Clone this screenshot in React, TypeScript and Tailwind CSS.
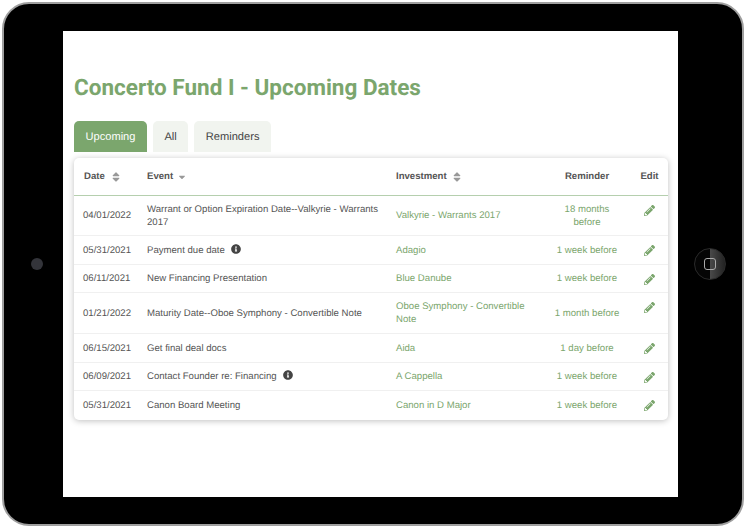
import React from 'react';
import { FaCaretDown, FaInfoCircle, FaPencilAlt, FaSort } from 'react-icons/fa';

const rows = [
  { date: '04/01/2022', event: 'Warrant or Option Expiration Date--Valkyrie - Warrants 2017', investment: 'Valkyrie - Warrants 2017', reminder: '18 months before', h: 'h-[40px]' },
  { date: '05/31/2021', event: 'Payment due date', info: true, investment: 'Adagio', reminder: '1 week before', h: 'h-[29px]' },
  { date: '06/11/2021', event: 'New Financing Presentation', investment: 'Blue Danube', reminder: '1 week before', h: 'h-[28px]' },
  { date: '01/21/2022', event: 'Maturity Date--Oboe Symphony - Convertible Note', investment: 'Oboe Symphony - Convertible Note', reminder: '1 month before', h: 'h-[41px]' },
  { date: '06/15/2021', event: 'Get final deal docs', investment: 'Aida', reminder: '1 day before', h: 'h-[29px]' },
  { date: '06/09/2021', event: 'Contact Founder re: Financing', info: true, investment: 'A Cappella', reminder: '1 week before', h: 'h-[28px]' },
  { date: '05/31/2021', event: 'Canon Board Meeting', investment: 'Canon in D Major', reminder: '1 week before', h: 'h-[30px]' },
];

export default function App() {
  return (
    <div className="w-[746px] h-[528px] bg-white pl-[2px] pt-[2px] font-['Liberation_Sans',sans-serif] [text-rendering:geometricPrecision]">
      {/* device frame */}
      <div className="w-[742px] h-[524px] flex rounded-[27px] bg-black border-2 border-[#9f9f9f]">
        <div className="w-[59px] flex items-center justify-center pl-[7px]">
          <div className="w-[12px] h-[12px] rounded-full bg-[#33343a]" />
        </div>

        {/* screen */}
        <div className="w-[615px] h-[466px] mt-[27px] bg-white px-[11px]">
          <h1 className="mt-[43px] font-['Roboto',sans-serif] text-[22.5px] leading-[28px] font-bold text-[#7ba66d]">Concerto Fund I - Upcoming Dates</h1>

          <div className="mt-[19px] flex gap-[6px] text-[11.1px] leading-[31px] h-[31px]">
            <div className="px-[11.5px] pt-px rounded-t-[5px] bg-[#7ba66d] text-white">Upcoming</div>
            <div className="px-[11.5px] pt-px rounded-t-[5px] bg-[#f1f4ef] text-[#444]">All</div>
            <div className="px-[11.5px] pt-px rounded-t-[5px] bg-[#f1f4ef] text-[#444]">Reminders</div>
          </div>

          <div className="mt-[6px] w-[594px] rounded-[5px] bg-white shadow-[0_1px_6px_rgba(0,0,0,0.25)] overflow-hidden">
            <table className="w-full table-fixed border-collapse text-[9.6px] leading-[13px]">
              <colgroup>
                <col className="w-[73px]" />
                <col className="w-[249px]" />
                <col className="w-[147px]" />
                <col className="w-[88px]" />
                <col className="w-[37px]" />
              </colgroup>
              <thead>
                <tr className="h-[37px] border-b border-[#b5cfae] text-[#555] font-bold text-left">
                  <th className="pl-[10px] pt-px">
                    <span className="flex items-center gap-[6px]">Date <FaSort className="text-[#999] w-[10px] h-[12px]" /></span>
                  </th>
                  <th className="pt-px">
                    <span className="flex items-center gap-[4px]">Event <FaCaretDown className="text-[#999] w-[10px] h-[10px]" /></span>
                  </th>
                  <th className="pt-px">
                    <span className="flex items-center gap-[5px]">Investment <FaSort className="text-[#999] w-[10px] h-[12px]" /></span>
                  </th>
                  <th className="pt-px text-center">Reminder</th>
                  <th className="pt-px text-center">Edit</th>
                </tr>
              </thead>
              <tbody>
                {rows.map((row) => (
                  <tr key={row.date + row.event} className={`${row.h} border-b border-[#f0f0f0] last:border-b-0`}>
                    <td className="pl-[9px] pt-px text-[#555]">{row.date}</td>
                    <td className="text-[#555] pt-px pr-[12px]">
                      {row.event}
                      {row.info && <FaInfoCircle className="inline ml-[6px] mb-[2px] w-[10px] h-[10px] text-[#444]" />}
                    </td>
                    <td className="text-[#7ba66d] pt-px pr-[8px]">{row.investment}</td>
                    <td className="text-[#7ba66d] pt-px text-center px-[8px]">{row.reminder}</td>
                    <td className="align-top pt-[9px]">
                      <FaPencilAlt className="mx-auto w-[11px] h-[11px] text-[#7ba66d]" />
                    </td>
                  </tr>
                ))}
              </tbody>
            </table>
          </div>
        </div>

        <div className="w-[64px] flex items-center justify-center">
          <div className="w-[32px] h-[32px] rounded-full border border-[#2a2a2a] bg-[linear-gradient(90deg,#050505_50%,#4a4a4a_50%,#222)] flex items-center justify-center">
            <div className="w-[12px] h-[12px] rounded-[3px] border border-[#aaa]" />
          </div>
        </div>
      </div>
    </div>
  );
}
